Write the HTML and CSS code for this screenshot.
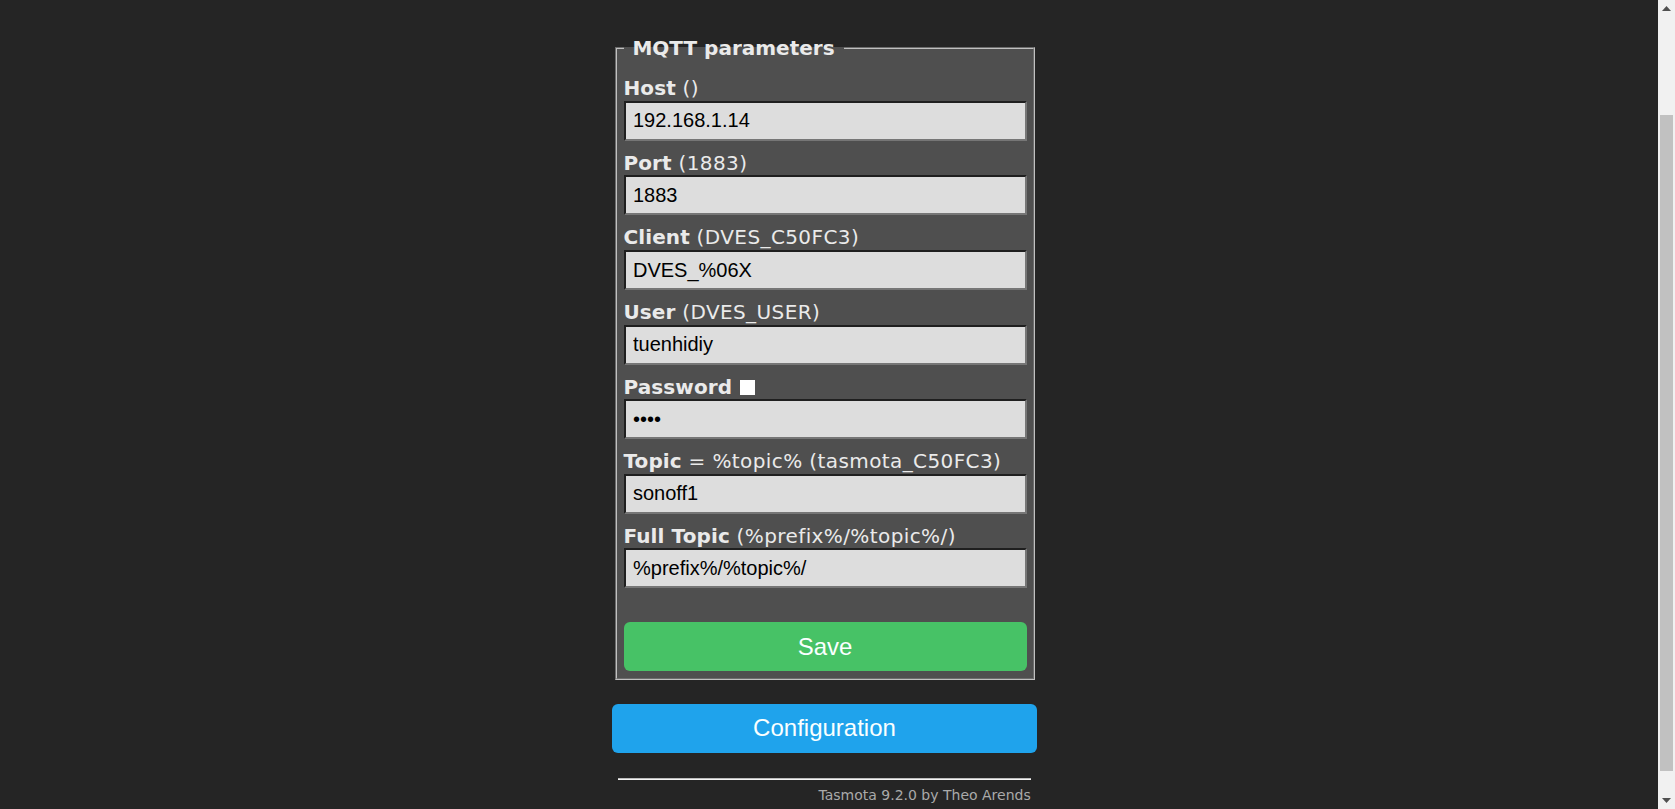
FILE: index.html
```html
<!DOCTYPE html>
<html>
<head>
<meta charset="utf-8">
<title>Tasmota - MQTT</title>
<link rel="stylesheet" href="styles.css">
</head>
<body>
<div class="page">
  <main class="main">
    <div class="wrap">
      <fieldset class="box">
        <legend class="legend"><b>&nbsp;MQTT parameters&nbsp;</b></legend>
        <form class="form">
          <div class="field">
            <div class="label"><b>Host</b> ()</div>
            <input class="inp" value="192.168.1.14">
          </div>
          <div class="field">
            <div class="label"><b>Port</b> (1883)</div>
            <input class="inp" value="1883">
          </div>
          <div class="field">
            <div class="label"><b>Client</b> (DVES_C50FC3)</div>
            <input class="inp" value="DVES_%06X">
          </div>
          <div class="field">
            <div class="label"><b>User</b> (DVES_USER)</div>
            <input class="inp" value="tuenhidiy">
          </div>
          <div class="field">
            <div class="label"><b>Password</b><span class="chk"></span></div>
            <input class="inp" type="password" value="****">
          </div>
          <div class="field">
            <div class="label"><b>Topic</b> = %topic% (tasmota_C50FC3)</div>
            <input class="inp" value="sonoff1">
          </div>
          <div class="field">
            <div class="label"><b>Full Topic</b> (%prefix%/%topic%/)</div>
            <input class="inp" value="%prefix%/%topic%/">
          </div>
          <div class="spacer"></div>
          <button type="button" class="btn green">Save</button>
        </form>
      </fieldset>
      <button type="button" class="btn blue cfg">Configuration</button>
      <div class="footer">
        <div class="rule"></div>
        <span class="credit">Tasmota 9.2.0 by Theo Arends</span>
      </div>
    </div>
  </main>
  <div class="scrollbar">
    <div class="arrow">
      <svg width="9" height="5" viewBox="0 0 9 5"><path d="M0 5 L4.5 0 L9 5 Z" fill="#505050"/></svg>
    </div>
    <div class="track"><div class="thumb"></div></div>
    <div class="arrow">
      <svg width="9" height="5" viewBox="0 0 9 5"><path d="M0 0 L9 0 L4.5 5 Z" fill="#505050"/></svg>
    </div>
  </div>
</div>
</body>
</html>
```
FILE: styles.css
```css
html, body {
  margin: 0;
  padding: 0;
  height: 100%;
  overflow: hidden;
  background: #252525;
}
body {
  font-family: "DejaVu Sans", Verdana, sans-serif;
  color: #eaeaea;
  font-size: 20px;
}
.page {
  display: flex;
  height: 100vh;
}
.main {
  flex: 1;
  display: flex;
  justify-content: center;
  align-items: flex-start;
  padding: 36px 9px 0 0;
}
.wrap {
  width: 425px;
}
.box {
  margin: 0 2px 0 3px;
  padding: 6.25px 6.5px 6.25px 6.5px;
  border: 2px groove #c0c0c0;
  background: #4f4f4f;
}
.legend {
  padding: 0 2px;
  line-height: 24px;
  font-size: 20px;
  color: #eaeaea;
}
.form {
  margin: 0;
}
.field {
  margin: 10px 0;
}
.label {
  line-height: 24.6px;
  white-space: nowrap;
  letter-spacing: 0.4px;
}
.label b {
  font-weight: bold;
  letter-spacing: 0.1px;
}
.chk {
  display: inline-block;
  width: 15px;
  height: 15px;
  margin-left: 8px;
  background: #ffffff;
  vertical-align: -1px;
}
.inp {
  display: block;
  width: 100%;
  height: 40px;
  box-sizing: border-box;
  margin: 0;
  padding: 0 6.25px 0 7.5px;
  font-family: "Liberation Sans", Arial, sans-serif;
  font-size: 20px;
  color: #000000;
  background: #dddddd;
  border-style: solid;
  border-width: 2px;
  border-color: #1f1f1f #767676 #767676 #1f1f1f;
  outline: none;
}
.spacer {
  height: 24px;
}
.btn {
  display: block;
  width: 100%;
  height: 49px;
  border: 0;
  border-radius: 6px;
  padding: 0;
  font-family: "Liberation Sans", Arial, sans-serif;
  font-size: 24px;
  color: #faffff;
  cursor: pointer;
}
.green {
  background: #47c266;
}
.blue {
  background: #1fa3ec;
}
.cfg {
  margin-top: 24px;
}
.footer {
  padding: 0 6.25px;
  text-align: right;
  font-size: 14px;
  margin-top: 25px;
}
.rule {
  height: 1px;
  border-top: 1px solid #bdbdbd;
  background: #f4f4f4;
  margin-bottom: 7px;
}
.credit {
  color: #aaaaaa;
}
.scrollbar {
  width: 17px;
  background: #f1f1f1;
  display: flex;
  flex-direction: column;
}
.arrow {
  height: 17px;
  display: flex;
  align-items: center;
  justify-content: center;
}
.track {
  flex: 1;
  display: flex;
  flex-direction: column;
  padding: 98px 2px 21px 2px;
}
.thumb {
  flex: 1;
  background: #c1c1c1;
}
```
